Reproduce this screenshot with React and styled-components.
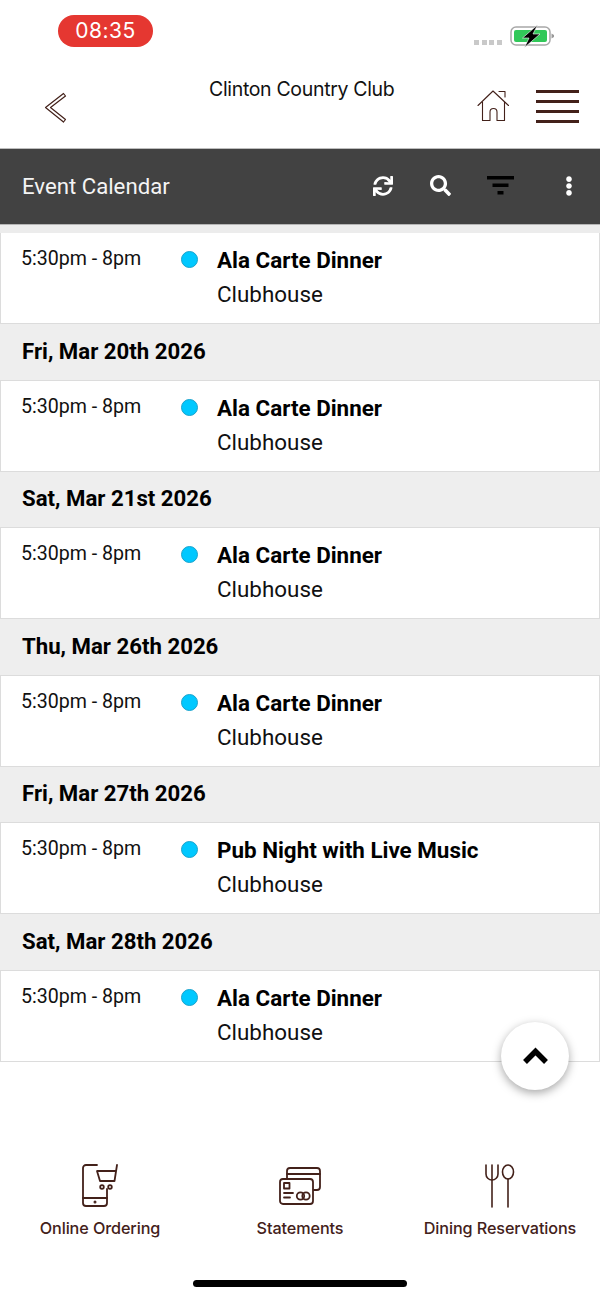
import React from "react";
import styled, { createGlobalStyle } from "styled-components";
import { FaSearch, FaSync, FaEllipsisV } from "react-icons/fa";

const GlobalStyle = createGlobalStyle`
  html, body {
    margin: 0;
    padding: 0;
    background: #fff;
  }
  * {
    box-sizing: border-box;
  }
`;

const Page = styled.div`
  position: relative;
  width: 600px;
  height: 1298px;
  overflow: hidden;
  background: #fff;
  display: flex;
  flex-direction: column;
  font-family: Roboto, sans-serif;
`;

const StatusBar = styled.div`
  height: 64px;
  padding: 15px 44px 0 58px;
  display: flex;
  justify-content: space-between;
  align-items: flex-start;
`;

const TimePill = styled.div`
  width: 95px;
  height: 32px;
  border-radius: 16px;
  background: #e53731;
  color: #fff;
  font: 400 21px/32px Inter, sans-serif;
  letter-spacing: 0.5px;
  text-align: center;
`;

const StatusRight = styled.div`
  display: flex;
  align-items: flex-end;
  gap: 8px;
  padding-top: 9px;
`;

const SignalDots = styled.div`
  display: flex;
  gap: 2.6px;
  padding-bottom: 3px;
`;

const SignalDot = styled.span`
  width: 5px;
  height: 5px;
  background: #c9c9c9;
`;

const Header = styled.header`
  height: 85px;
  flex: none;
  padding: 0 21px 0 44px;
  display: flex;
  align-items: flex-start;
  border-bottom: 1px solid #bdbdbd;
`;

const BackButton = styled.div`
  padding-top: 28px;
  width: 165px;
`;

const ClubName = styled.div`
  width: 186px;
  padding-top: 12px;
  font: 400 19.5px/26px Inter, sans-serif;
  letter-spacing: -0.33px;
  color: #111;
  white-space: nowrap;
`;

const HeaderIcons = styled.div`
  margin-left: auto;
  padding-top: 26px;
  display: flex;
  gap: 26px;
  align-items: flex-start;
`;

const Toolbar = styled.div`
  height: 76px;
  flex: none;
  background: #424242;
  border-bottom: 1px solid #b5b5b5;
  padding: 0 0 2px 22px;
  display: flex;
  align-items: center;
  color: #fff;
`;

const ToolbarTitle = styled.div`
  flex: 1;
  font-size: 22.2px;
  font-weight: 400;
  color: #f4f4f4;
`;

const ToolSlot = styled.div`
  width: ${(p) => p.$w}px;
  display: flex;
  justify-content: center;
  align-items: center;
  font-size: ${(p) => p.$size || 20}px;
`;

const List = styled.div`
  border-top: 8px solid #ececec;
  flex: none;
`;

const DateHeader = styled.div`
  height: 57.5px;
  background: #eeeeee;
  border-top: 1px solid #dcdcdc;
  border-bottom: 1px solid #dcdcdc;
  padding: 0 22px 2px;
  display: flex;
  align-items: center;
  font-size: 22.2px;
  font-weight: 700;
  color: #000;
`;

const EventRow = styled.div`
  height: 90px;
  background: #fff;
  border-left: 1px solid #dcdcdc;
  border-right: 1px solid #dcdcdc;
  display: flex;
  padding-top: 12px;
  &:last-child {
    height: 91px;
    border-bottom: 1px solid #dcdcdc;
  }
`;

const EventTime = styled.div`
  width: 180px;
  padding: 1px 0 0 20px;
  font-size: 19.6px;
  line-height: 26px;
  color: #111;
  white-space: nowrap;
`;

const Dot = styled.span`
  width: 17px;
  height: 17px;
  margin-top: 6px;
  border-radius: 50%;
  background: #00c8ff;
  border: 1px solid #1aa3cc;
  flex: none;
`;

const EventInfo = styled.div`
  margin-left: 19px;
`;

const EventTitle = styled.div`
  font-size: 22.4px;
  line-height: 30px;
  font-weight: 700;
  color: #000;
`;

const EventPlace = styled.div`
  font-size: 22.4px;
  line-height: 30px;
  margin-top: 4px;
  color: #111;
`;

const ScrollTop = styled.button`
  position: absolute;
  left: 501px;
  top: 1022px;
  width: 68px;
  height: 68px;
  border-radius: 50%;
  border: none;
  background: #fff;
  box-shadow: 0 3px 10px rgba(0, 0, 0, 0.35);
  display: flex;
  align-items: center;
  justify-content: center;
  padding: 0;
`;

const Footer = styled.nav`
  margin-top: 102px;
  display: grid;
  grid-template-columns: 200px 200px 200px;
`;

const FooterItem = styled.div`
  display: flex;
  flex-direction: column;
  align-items: center;
  color: #43211a;
  font: 500 16.2px/20px Inter, sans-serif;
  letter-spacing: -0.1px;
  white-space: nowrap;
`;

const FooterIcon = styled.div`
  height: 44px;
  margin-bottom: 10px;
`;

const HomeBar = styled.div`
  align-self: center;
  width: 214px;
  height: 7px;
  border-radius: 4px;
  background: #000;
  margin-top: 42px;
`;

const BROWN = "#43211a";

const Battery = () => (
  <svg width="46" height="24" viewBox="0 0 46 24">
    <rect x="1" y="3" width="39" height="18" rx="5" fill="#fff" stroke="#a8a8a8" strokeWidth="1.5" />
    <rect x="4" y="6" width="33" height="12" rx="2" fill="#31c859" />
    <path d="M41.5 9.5 L44 11 V13 L41.5 14.5Z" fill="#999" />
    <path d="M27.5 1 L12.5 14 H19 L14.5 23.5 L30 10 H23 Z" fill="#000" stroke="#fff" strokeWidth="0.6" />
  </svg>
);

const BackIcon = () => (
  <svg width="24" height="32" viewBox="0 0 24 32">
    <path d="M19.5 1.5 L1.5 15.5 L19.5 30 L21.5 27.5 L6.5 15.5 L21.5 4 Z" fill="none" stroke={BROWN} strokeWidth="1.2" strokeLinejoin="round" />
  </svg>
);

const HomeIcon = () => (
  <svg width="33" height="32" viewBox="0 0 33 32" fill="none" stroke={BROWN} strokeWidth="1.1" strokeLinecap="round" strokeLinejoin="round">
    <path d="M1 15.5 L16 1 L31.5 15.5" />
    <path d="M22 1.5 H28 V7" />
    <path d="M5.5 12 V30.5 H13 V22 A3.5 3.5 0 0 1 20 22 V30.5 H27.5 V12" />
  </svg>
);

const MenuIcon = () => (
  <svg width="43" height="33" viewBox="0 0 43 33" fill={BROWN}>
    <rect x="0" y="0" width="43" height="3" />
    <rect x="0" y="10" width="43" height="3" />
    <rect x="0" y="20" width="43" height="3" />
    <rect x="0" y="30" width="43" height="3" />
  </svg>
);

const FilterIcon = () => (
  <svg width="27" height="19" viewBox="0 0 27 19" fill="#000">
    <rect x="0" y="0" width="27" height="3.5" />
    <rect x="5.5" y="7.5" width="16" height="3.5" />
    <rect x="10.5" y="15" width="6" height="3.5" />
  </svg>
);

const ChevronIcon = () => (
  <svg width="27" height="20" viewBox="0 0 27 20">
    <path d="M3 16 L13.5 5.5 L24 16" fill="none" stroke="#000" strokeWidth="5.5" strokeLinejoin="miter" />
  </svg>
);

const OrderIcon = () => (
  <svg width="38" height="44" viewBox="0 0 38 44" fill="none" stroke={BROWN} strokeWidth="1.8" strokeLinecap="round" strokeLinejoin="round">
    <path d="M16 1 H5 A3 3 0 0 0 2 4 V39 A3 3 0 0 0 5 42 H23 A3 3 0 0 0 26 39 V25" />
    <path d="M2 34 H26" />
    <circle cx="14" cy="38" r="0.6" />
    <path d="M36 1 L33.5 17 H19 L16 7 H34.5" />
    <circle cx="21" cy="23" r="1.8" />
    <circle cx="29" cy="23" r="1.8" />
  </svg>
);

const StatementIcon = () => (
  <svg width="42" height="42" viewBox="0 0 42 42" fill="none" stroke={BROWN} strokeWidth="1.8" strokeLinecap="round" strokeLinejoin="round">
    <path d="M8 14 V7 A3 3 0 0 1 11 4 H38 A3 3 0 0 1 41 7 V23 A3 3 0 0 1 38 26 H35" />
    <path d="M8 10 H41" />
    <rect x="1" y="15" width="33" height="25" rx="3" />
    <rect x="5" y="19" width="5.5" height="5.5" />
    <path d="M5 29 H14 M5 33.5 H11" />
    <circle cx="21.5" cy="32" r="3.7" />
    <circle cx="27" cy="32" r="3.7" />
  </svg>
);

const DiningIcon = () => (
  <svg width="30" height="44" viewBox="0 0 30 44" fill="none" stroke={BROWN} strokeWidth="1.6" strokeLinecap="round">
    <path d="M1 1 V10 A6 6 0 0 0 13 10 V1" />
    <path d="M7 1 V43" />
    <ellipse cx="23" cy="8" rx="5.5" ry="7" />
    <path d="M23 15 V43" />
  </svg>
);

const days = [
  { time: "5:30pm - 8pm", title: "Ala Carte Dinner" },
  { date: "Fri, Mar 20th 2026", time: "5:30pm - 8pm", title: "Ala Carte Dinner" },
  { date: "Sat, Mar 21st 2026", time: "5:30pm - 8pm", title: "Ala Carte Dinner" },
  { date: "Thu, Mar 26th 2026", time: "5:30pm - 8pm", title: "Ala Carte Dinner" },
  { date: "Fri, Mar 27th 2026", time: "5:30pm - 8pm", title: "Pub Night with Live Music" },
  { date: "Sat, Mar 28th 2026", time: "5:30pm - 8pm", title: "Ala Carte Dinner" },
];

function App() {
  return (
    <Page>
      <GlobalStyle />
      <StatusBar>
        <TimePill>08:35</TimePill>
        <StatusRight>
          <SignalDots>
            <SignalDot />
            <SignalDot />
            <SignalDot />
            <SignalDot />
          </SignalDots>
          <Battery />
        </StatusRight>
      </StatusBar>
      <Header>
        <BackButton>
          <BackIcon />
        </BackButton>
        <ClubName>Clinton Country Club</ClubName>
        <HeaderIcons>
          <HomeIcon />
          <MenuIcon />
        </HeaderIcons>
      </Header>
      <Toolbar>
        <ToolbarTitle>Event Calendar</ToolbarTitle>
        <ToolSlot $w={70}><FaSync /></ToolSlot>
        <ToolSlot $w={44} $size={21}><FaSearch /></ToolSlot>
        <ToolSlot $w={76}><FilterIcon /></ToolSlot>
        <ToolSlot $w={62} $size={20}><FaEllipsisV /></ToolSlot>
      </Toolbar>
      <List>
        {days.map((d, i) => (
          <React.Fragment key={i}>
            {d.date && <DateHeader>{d.date}</DateHeader>}
            <EventRow>
              <EventTime>{d.time}</EventTime>
              <Dot />
              <EventInfo>
                <EventTitle>{d.title}</EventTitle>
                <EventPlace>Clubhouse</EventPlace>
              </EventInfo>
            </EventRow>
          </React.Fragment>
        ))}
      </List>
      <ScrollTop aria-label="Scroll to top">
        <ChevronIcon />
      </ScrollTop>
      <Footer>
        <FooterItem>
          <FooterIcon><OrderIcon /></FooterIcon>
          Online Ordering
        </FooterItem>
        <FooterItem>
          <FooterIcon><StatementIcon /></FooterIcon>
          Statements
        </FooterItem>
        <FooterItem>
          <FooterIcon><DiningIcon /></FooterIcon>
          Dining Reservations
        </FooterItem>
      </Footer>
      <HomeBar />
    </Page>
  );
}

export default App;
